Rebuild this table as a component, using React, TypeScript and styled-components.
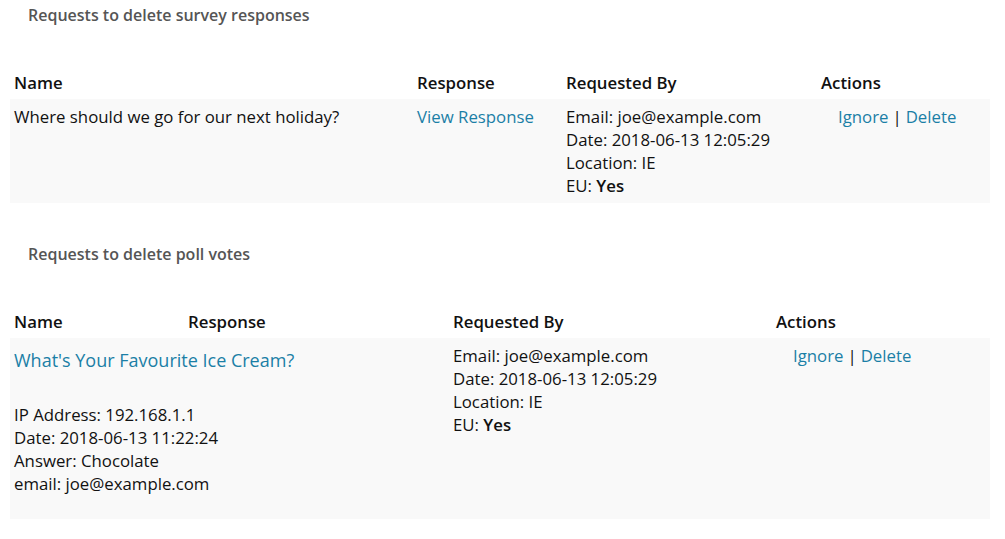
import React from 'react'
import styled, { createGlobalStyle } from 'styled-components'

const GlobalStyle = createGlobalStyle`
  body {
    margin: 0;
    background: #fff;
    font-family: 'Open Sans', 'Liberation Sans', sans-serif;
    color: #111;
  }
`

const Page = styled.div`
  width: 1005px;
  padding: 5px 0 0 10px;
  box-sizing: border-box;
`

const Section = styled.section`
  margin-bottom: 41px;
`

const Title = styled.h3`
  margin: 0 0 40px 18px;
  font-size: 16px;
  line-height: 20px;
  font-weight: 600;
  color: #555;
`

const Table = styled.table`
  width: 980px;
  border-collapse: collapse;
  table-layout: fixed;
  font-size: 16.8px;
  line-height: 23px;
`

const Th = styled.th<{ $w?: number }>`
  width: ${(p) => (p.$w ? `${p.$w}px` : 'auto')};
  text-align: left;
  font-weight: 600;
  padding: 6px 4px 5px;
  vertical-align: top;
`

const Row = styled.tr`
  background: #f9f9f9;
`

const Td = styled.td<{ $pad?: number; $bottom?: number }>`
  vertical-align: top;
  padding: 6px 4px ${(p) => p.$bottom ?? 6}px ${(p) => p.$pad ?? 4}px;
`

const Link = styled.a`
  color: #1b7fa6;
  text-decoration: none;
  cursor: pointer;
`

const TitleLink = styled(Link)`
  display: block;
  font-size: 18px;
  line-height: 23px;
  margin: 5px 0 31px;
`

const Sep = styled.span`
  color: #111;
  margin: 0 4px;
`

const Line = styled.div``

const Strong = styled.strong`
  font-weight: 600;
`

const Requester = () => (
  <>
    <Line>Email: joe@example.com</Line>
    <Line>Date: 2018-06-13 12:05:29</Line>
    <Line>Location: IE</Line>
    <Line>
      EU: <Strong>Yes</Strong>
    </Line>
  </>
)

const Actions = () => (
  <>
    <Link>Ignore</Link>
    <Sep>|</Sep>
    <Link>Delete</Link>
  </>
)

export default function App() {
  return (
    <Page>
      <GlobalStyle />
      <Section>
        <Title>Requests to delete survey responses</Title>
        <Table>
          <thead>
            <tr>
              <Th $w={395}>Name</Th>
              <Th $w={141}>Response</Th>
              <Th $w={247}>Requested By</Th>
              <Th>Actions</Th>
            </tr>
          </thead>
          <tbody>
            <Row>
              <Td>Where should we go for our next holiday?</Td>
              <Td>
                <Link>View Response</Link>
              </Td>
              <Td>
                <Requester />
              </Td>
              <Td $pad={21}>
                <Actions />
              </Td>
            </Row>
          </tbody>
        </Table>
      </Section>
      <Section>
        <Title>Requests to delete poll votes</Title>
        <Table>
          <thead>
            <tr>
              <Th $w={166}>Name</Th>
              <Th $w={257}>Response</Th>
              <Th $w={315}>Requested By</Th>
              <Th>Actions</Th>
            </tr>
          </thead>
          <tbody>
            <Row>
              <Td colSpan={2} $bottom={24}>
                <TitleLink>What's Your Favourite Ice Cream?</TitleLink>
                <Line>IP Address: 192.168.1.1</Line>
                <Line>Date: 2018-06-13 11:22:24</Line>
                <Line>Answer: Chocolate</Line>
                <Line>email: joe@example.com</Line>
              </Td>
              <Td>
                <Requester />
              </Td>
              <Td $pad={21}>
                <Actions />
              </Td>
            </Row>
          </tbody>
        </Table>
      </Section>
    </Page>
  )
}
